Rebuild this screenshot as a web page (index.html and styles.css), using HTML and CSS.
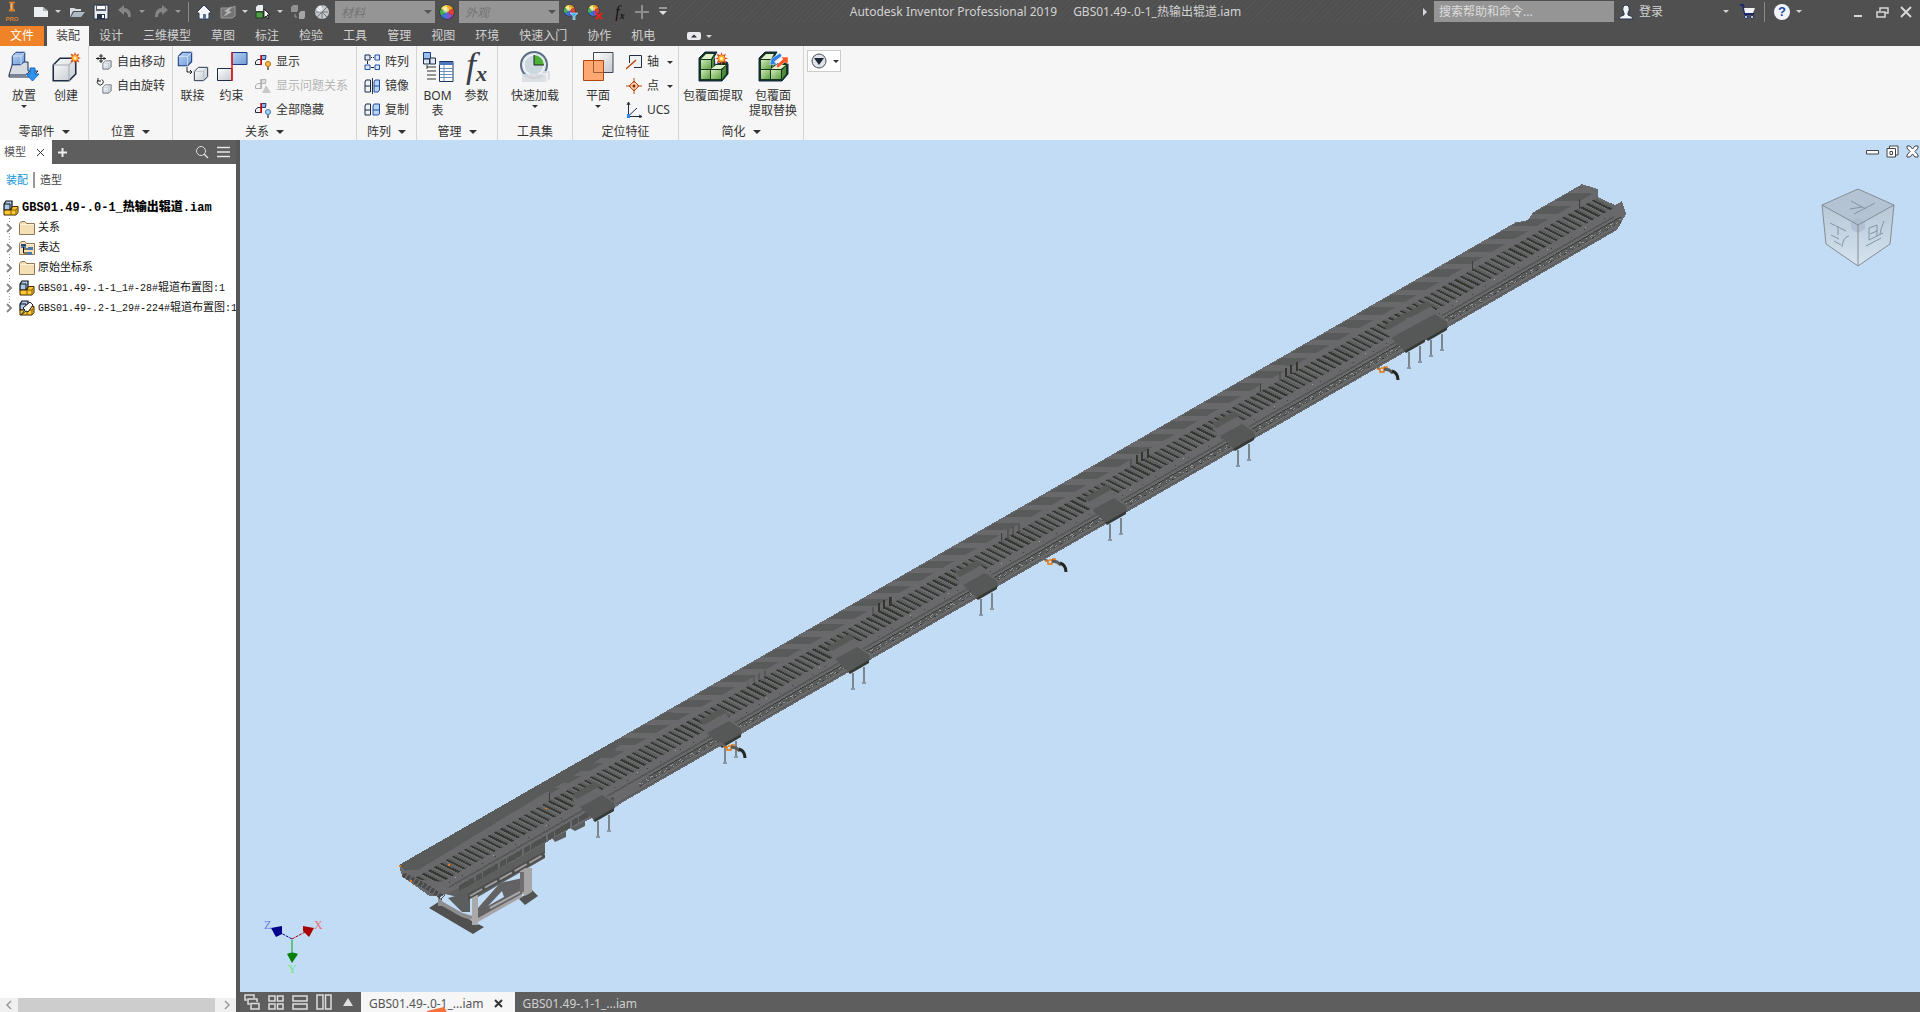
FILE: index.html
```html
<!DOCTYPE html>
<html lang="zh-CN">
<head>
<meta charset="utf-8">
<title>Autodesk Inventor Professional 2019</title>
<link rel="stylesheet" href="styles.css">
</head>
<body>
<svg class="defs" aria-hidden="true">
  <defs>
    <linearGradient id="gBlue" x1="0" y1="0" x2="1" y2="1"><stop offset="0" stop-color="#b9d3f2"/><stop offset="1" stop-color="#6f9bd6"/></linearGradient>
    <linearGradient id="gGrey" x1="0" y1="0" x2="1" y2="1"><stop offset="0" stop-color="#ffffff"/><stop offset="1" stop-color="#c3c8cd"/></linearGradient>
    <linearGradient id="gGreen" x1="0" y1="0" x2="1" y2="1"><stop offset="0" stop-color="#cfe8b8"/><stop offset="1" stop-color="#5fa044"/></linearGradient>
    <symbol id="wheel" viewBox="0 0 16 16">
      <circle cx="8" cy="8" r="7.5" fill="#222b45"/>
      <path d="M8 8V1A7 7 0 0 1 14 4.500Z" fill="#f4a21c"/><path d="M8 8 14 4.500A7 7 0 0 1 14 11.500Z" fill="#e2402c"/><path d="M8 8 14 11.500A7 7 0 0 1 8 15Z" fill="#8c4fc0"/><path d="M8 8V15A7 7 0 0 1 2 11.500Z" fill="#3b74dc"/><path d="M8 8 2 11.500A7 7 0 0 1 2 4.500Z" fill="#47b04a"/><path d="M8 8 2 4.500A7 7 0 0 1 8 1Z" fill="#f5e25c"/>
      <circle cx="7" cy="6" r="3" fill="#fff" opacity=".45"/>
    </symbol>
    <symbol id="burst" viewBox="0 0 12 12">
      <path d="M6 0 7 3 10 1.500 9 5 12 6 9 7 10.500 10.500 7 9 6 12 5 9 1.500 10.500 3 7 0 6 3 5 1.500 1.500 5 3Z" fill="#d8481c"/><circle cx="6" cy="6" r="3" fill="#ffb02e"/><circle cx="6" cy="6" r="1.500" fill="#fff6b0"/>
    </symbol>
    <symbol id="cube" viewBox="0 0 12 12">
      <path d="M1 4 4 1H11V8L8 11H1Z" fill="url(#gGrey)" stroke="#1d2b45" stroke-width=".7"/><path d="M1 4H8V11M8 4 11 1" fill="none" stroke="#a9b0ba" stroke-width=".5"/>
    </symbol>
    <symbol id="bcube" viewBox="0 0 12 12">
      <path d="M1 4 4 1H11V8L8 11H1Z" fill="url(#gBlue)" stroke="#173a80" stroke-width=".8"/><path d="M1 4H8V11M8 4 11 1" fill="none" stroke="#e2edfb" stroke-width=".6"/>
    </symbol>
    <symbol id="rel" viewBox="0 0 16 16">
      <path d="M.5 7.500 3 5.500H6.500V10.500H.5Z" fill="#eef1f4" stroke="#1d2b45"/><path d="M6.500 1.500H11L10.500 5.500H6.500Z" fill="#8fb2e2" stroke="#173a80"/><path d="M6 1V11" stroke="#e00000" stroke-width="1.500"/>
    </symbol>
    <symbol id="part" viewBox="0 0 16 16">
      <path d="M1 4 3 1H9V8L7 10H1Z" fill="#a9c8ea" stroke="#101010" stroke-width="1.200"/><path d="M1 4H7V10" fill="none" stroke="#101010"/>
      <path d="M1 10H8L9.500 6.500H15V12.500L13 15H1Z" fill="#ffc933" stroke="#3c2a00"/><path d="M8 10V15M8 10H13V15M13 10 15 7" fill="none" stroke="#8a5d00"/>
    </symbol>
    <symbol id="folder" viewBox="0 0 16 16">
      <path d="M.5 3.500Q1 2 3 1.500H6L7.500 3.500H15.500V14.500H.5Z" fill="#f5dfb4" stroke="#8f7655"/><path d="M1 4.500H15" stroke="#fff2d6"/>
    </symbol>
    <symbol id="vault" viewBox="0 0 32 32">
      <path d="M2 7 8 1H20L17 6 18 14 25 11H30L31 13V23L25 30H2Z" fill="#17351b" stroke="#0f2a4b"/>
      <path d="M4 8 9 3H17L14 8Z" fill="#dff0cd"/><path d="M4 9H14V18H4Z" fill="url(#gGreen)"/><path d="M15 9 17 5V15L15 17Z" fill="#4f8a3a"/>
      <path d="M4 19H13V28H4Z" fill="url(#gGreen)"/><path d="M14 19H24V28H14Z" fill="url(#gGreen)"/><path d="M14 18 19 14H29L24 18Z" fill="#dff0cd"/><path d="M25 19 29 15V23L25 28Z" fill="#4f8a3a"/>
    </symbol>
  </defs>
</svg>

<div class="app">
<header class="titlebar">
  <div class="quick">
    <button class="tool logo" aria-label="Inventor Pro"><svg width="14" height="20" viewBox="0 0 14 20"><path d="M3 1H11V3H9V11H11V14H3V11H5V3H3Z" fill="#d9812e"/><path d="M5 3H7V11H5Z" fill="#f6ba77"/></svg><span class="pro">PRO</span></button>
    <button class="tool new" aria-label="新建"><svg width="16" height="14"><path d="M1 2H10L15 6V12H1Z" fill="#eceff2"/><path d="M10 2V6H15" fill="#aab0b6"/></svg></button><span class="caret c1"></span>
    <button class="tool" aria-label="打开"><svg width="16" height="14"><path d="M1 12V3H5L7 4H12V6H4Z" fill="#d7dde3"/><path d="M2 12 5 7H16L12 12Z" fill="#aeb9c6"/></svg></button>
    <button class="tool save" aria-label="保存"><svg width="16" height="16"><path d="M1 1H15V15H1Z" fill="#e8ebf0" stroke="#27304a"/><path d="M3 1H13V7H3Z" fill="#5b6272"/><path d="M4 2H12V5H4Z" fill="#fff"/><path d="M4 10H12V15H4Z" fill="#27304a"/><path d="M9 11H11V14H9Z" fill="#fff"/></svg></button>
    <button class="tool undo" aria-label="撤销"><svg width="16" height="14"><path d="M1 5 7 0V3Q14 3 14 12H11Q11 7 7 7V10Z" fill="#858585"/></svg></button><span class="caret dim"></span>
    <button class="tool undo" aria-label="重做"><svg width="16" height="14"><path d="M15 5 9 0V3Q2 3 2 12H5Q5 7 9 7V10Z" fill="#858585"/></svg></button><span class="caret dim"></span>
    <span class="vsep"></span>
    <button class="tool" aria-label="主页"><svg width="16" height="16"><path d="M1 8 8 1 15 8V9H13V15H3V9H1Z" fill="#f4f6f8" stroke="#2d3a55"/><path d="M7 10H10V15H7Z" fill="#54709c"/></svg></button>
    <button class="tool home" aria-label="更新"><svg width="16" height="16"><path d="M1 4H11L15 2V12L12 14H1Z" fill="#747474" stroke="#9b9b9b"/><path d="M3 13 7 8 4 7 12 2 9 7 12 8Z" fill="#b5b5b5"/></svg></button><span class="caret"></span>
    <button class="tool sel" aria-label="选择"><svg width="16" height="16"><path d="M1 3 3 1H8V7H1Z" fill="#e9edf0"/><path d="M1 8H8V14H1Z" fill="#4f9e46" stroke="#183f18"/><path d="M9 5V14L11 12 13 15 14 14 12 11H15Z" fill="#fff" stroke="#222"/></svg></button><span class="caret"></span>
    <button class="tool sel" aria-label="部件"><svg width="16" height="16"><path d="M1 3 3 1H8V6L7 8H1Z" fill="#929292"/><path d="M9 9 11 7H15V13L14 15H9Z" fill="#a5a5a5"/><path d="M5 10V13H7" stroke="#999" fill="none"/></svg></button>
    <button class="tool ball" aria-label="材料"><svg width="16" height="16"><circle cx="8" cy="8" r="7" fill="#c4c8cb"/><path d="M3 3 13 13M2 8H14M8 1V15M13 3 3 13" stroke="#70757a"/><circle cx="6" cy="5" r="3" fill="#fff" opacity=".7"/></svg></button>
    <div class="combo"><select aria-label="材料"><option>材料</option></select><span class="caret dark"></span></div>
    <button class="tool w1" aria-label="外观"><svg width="16" height="16"><use href="#wheel"/></svg></button>
    <div class="combo"><select aria-label="外观"><option>外观</option></select><span class="caret dark"></span></div>
    <button class="tool w1" aria-label="调整"><svg width="16" height="16"><use href="#wheel" width="13" height="13"/><path d="M7 9H15L12 12V16H10V12Z" fill="#39b4ea" stroke="#fff" stroke-width=".5"/></svg></button>
    <button class="tool w2" aria-label="清除"><svg width="16" height="16"><use href="#wheel" width="13" height="13"/><path d="M9 9 15 15M15 9 9 15" stroke="#e3251b" stroke-width="2"/></svg></button>
    <button class="tool fx" aria-label="参数"><i>f</i><sub>x</sub></button>
    <button class="tool plus" aria-label="添加"><svg width="16" height="16"><path d="M8 1V15M1 8H15" stroke="#8d8d8d" stroke-width="2"/></svg></button>
    <button class="tool more" aria-label="自定义"><svg width="10" height="10"><path d="M1 1H9" stroke="#e0e0e0"/><path d="M1 4H9L5 8Z" fill="#e0e0e0"/></svg></button>
  </div>
  <div class="title"><span>Autodesk Inventor Professional 2019</span><span>GBS01.49-.0-1_热输出辊道.iam</span></div>
  <div class="account">
    <svg width="5" height="10"><path d="M0 1 4 5 0 9Z" fill="#d5d5d5"/></svg>
    <input class="search" type="text" aria-label="搜索" placeholder="搜索帮助和命令...">
    <button class="login"><svg width="16" height="16"><path d="M1 15Q1 12 6 11V9Q4 6 5 3Q8-1 11 3Q12 6 10 9V11Q15 12 15 15Z" fill="#f1f3f7" stroke="#25304c"/></svg>登录</button>
    <span class="caret acc"></span>
    <button class="tool cart" aria-label="商店"><svg width="16" height="16"><path d="M0 1H3L5 10H14" fill="none" stroke="#1d2b66" stroke-width="2"/><path d="M4 4H15L13 9H5Z" fill="#f4f4f8"/><circle cx="6" cy="13" r="1.500" fill="#fff" stroke="#1d2b66"/><circle cx="12" cy="13" r="1.500" fill="#fff" stroke="#1d2b66"/></svg></button>
    <span class="vsep"></span>
    <button class="help" aria-label="帮助">?</button><span class="caret hc"></span>
    <button class="tool win" aria-label="最小化"><svg width="12" height="12"><path d="M2 10H10" stroke="#d8d8d8" stroke-width="2"/></svg></button>
    <button class="tool win" aria-label="还原"><svg width="13" height="12"><path d="M4 5V2H12V7H9M1 6H9V11H1Z" fill="none" stroke="#d8d8d8" stroke-width="1.500"/></svg></button>
    <button class="tool win" aria-label="关闭"><svg width="12" height="12"><path d="M1 1 11 11M11 1 1 11" stroke="#d8d8d8" stroke-width="2"/></svg></button>
  </div>
</header>

<nav class="tabs">
  <button class="file">文件</button><button class="active">装配</button><button>设计</button><button>三维模型</button><button>草图</button><button>标注</button><button>检验</button><button>工具</button><button>管理</button><button>视图</button><button>环境</button><button>快速入门</button><button>协作</button><button>机电</button>
  <button class="collapse" aria-label="折叠功能区"><svg width="14" height="9"><rect width="14" height="8" rx="2" fill="#e9e9ee"/><path d="M4 5.500H10L7 2.500Z" fill="#2b2b2b"/></svg><span class="caret"></span></button>
</nav>

<section class="ribbon">
  <div class="panel p1"><div class="row">
    <button class="big"><svg width="32" height="32"><path d="M1 24 5 11H20V20H30L25 25 26 26H1Z" fill="#d7dce2" stroke="#1d2b45"/><path d="M1 24H18L24 18" fill="none" stroke="#1d2b45"/><use href="#bcube" x="3" y="0" width="15" height="15"/><path d="M22 17H27V23H31L24.500 30 18 23H22Z" fill="#2f94f0" stroke="#1769c2"/></svg>放置<span class="caret"></span></button>
    <button class="big"><svg width="32" height="32"><use href="#cube" x="1" y="5" width="27" height="27"/><use href="#burst" x="19" y="1" width="12" height="12"/></svg>创建</button>
  </div><h2>零部件<span class="caret"></span></h2></div>

  <div class="panel p2"><div class="col">
    <button class="small"><svg width="16" height="16"><path d="M5 0V9M0 4.500H10M3 2H7M3 7H7M2 3V6M8 3V6" stroke="#222" fill="none"/><use href="#cube" x="6" y="6" width="10" height="10"/></svg>自由移动</button>
    <button class="small"><svg width="16" height="16"><path d="M6 1.500A3 3 0 1 1 2 2M2 0V3H5" stroke="#222" fill="none"/><use href="#cube" x="6" y="6" width="10" height="10"/></svg>自由旋转</button>
  </div><h2>位置<span class="caret"></span></h2></div>

  <div class="panel p3"><div class="row">
    <button class="big"><svg width="32" height="32"><use href="#bcube" x="0" y="0" width="16" height="16"/><use href="#cube" x="16" y="15" width="16" height="16"/><path d="M10 16V21H14M13 19 15 21 13 23" fill="none" stroke="#222"/></svg>联接</button>
    <button class="big"><svg width="32" height="32"><path d="M16 1.500H31V13.500H16Z" fill="url(#gBlue)" stroke="#173a80"/><path d="M1.500 17.500H16V29.500H1.500Z" fill="url(#gGrey)" stroke="#1d2b45"/><path d="M16 1V30" stroke="#f01010" stroke-width="1.500"/></svg>约束</button>
    <div class="col">
      <button class="small"><svg width="16" height="16"><use href="#rel"/><circle cx="13" cy="10" r="2.500" fill="#ffc23c" stroke="#b8650c"/><path d="M12 13H14V16H12Z" fill="#777"/></svg>显示</button>
      <button class="small" disabled><svg class="off" width="16" height="16"><use href="#rel"/><path d="M11 7 16 15H7Z" fill="#777"/></svg>显示问题关系</button>
      <button class="small"><svg width="16" height="16"><use href="#rel"/><circle cx="13" cy="10" r="2.500" fill="#a9d2f7" stroke="#3474b0"/><path d="M12 13H14V16H12Z" fill="#777"/></svg>全部隐藏</button>
    </div>
  </div><h2>关系<span class="caret"></span></h2></div>

  <div class="panel p4"><div class="col">
    <button class="small"><svg width="16" height="16"><g fill="#dce8f8" stroke="#1f4fa8"><path d="M1 1H6V6H1Z" stroke="#1d2b45"/><path d="M11 1H15.500V6H11ZM1 11H6V15.500H1ZM11 11H15.500V15.500H11Z"/></g><path d="M3.500 7V10M7 3.500H8M9 3.500H10M7 13.500H10" stroke="#222"/></svg>阵列</button>
    <button class="small"><svg width="16" height="16"><path d="M1 4 2 2H6.500V14H1ZM1 8H6" fill="#eef1f4" stroke="#1d2b45"/><path d="M10 4 11 2H15.500V12L14 14H10ZM10 8H15" fill="#bcd4f3" stroke="#1f4fa8"/><path d="M8.500 0V16" stroke="#333"/></svg>镜像</button>
    <button class="small"><svg width="16" height="16"><path d="M1 4 2 2H6.500V13H1ZM1 8H6" fill="#eef1f4" stroke="#1d2b45"/><path d="M9 4 10 2H15.500V12L14 13H9ZM9 8H15" fill="#bcd4f3" stroke="#1f4fa8"/></svg>复制</button>
  </div><h2>阵列<span class="caret"></span></h2></div>

  <div class="panel p5"><div class="row">
    <button class="big"><svg width="32" height="32"><path d="M1.500 1.500H8.500V8H1.500Z" fill="#9dbdea" stroke="#173a80"/><path d="M1.500 8H7.500V13H1.500ZM8 7H13.500V13H8Z" fill="#dfe9f5" stroke="#1d2b45"/><path d="M5 16H14M5 20H14M5 24H14M5 28H14M5 14V18" stroke="#333"/><path d="M17.500 10.500H31V30.500H17.500Z" fill="#fff" stroke="#1d3561"/><path d="M17 11H31V14H17Z" fill="#4b78ba"/><path d="M18 17.500H31M18 20.500H31M18 23.500H31M18 26.500H31M22 14V30" stroke="#6d8fb9"/></svg>BOM<br>表</button>
    <button class="big"><span class="fxbig"><i>f</i><sub>x</sub></span>参数</button>
  </div><h2>管理<span class="caret"></span></h2></div>

  <div class="panel p6"><div class="row">
    <button class="big"><svg width="32" height="32"><circle cx="15" cy="14" r="13" fill="#dfe6ec" stroke="#5a6f84" stroke-width="2"/><circle cx="15" cy="14" r="10" fill="#cbd8e0" stroke="#fff"/><path d="M15 14V4A10 10 0 0 1 25 14Z" fill="#4cb038"/><path d="M15 4V14H25" stroke="#222" fill="none"/><path d="M3 23H22L25 20H31V28L28 31H3Z" fill="#d9dde1" opacity=".9"/><path d="M22 23H28V31" stroke="#fff" fill="none"/></svg>快速加载<span class="caret"></span></button>
  </div><h2>工具集</h2></div>

  <div class="panel p7"><div class="row">
    <button class="big"><svg width="32" height="32"><path d="M11.500 1.500H31V21.500H11.500Z" fill="url(#gGrey)" stroke="#3b4450"/><path d="M1.500 9.500H21.500V29.500H1.500Z" fill="#ff9f63" stroke="#b04713" fill-opacity=".9"/><path d="M11.500 10V21.500H21" stroke="#9b5c38" fill="none"/></svg>平面<span class="caret"></span></button>
    <div class="col">
      <button class="small"><svg width="16" height="16"><path d="M3.500 9V1.500H15.500V13.500H8" fill="#eef0f2" stroke="#222e42"/><path d="M0 15 10 6" stroke="#bd4a12" stroke-width="1.500"/></svg>轴<span class="caret"></span></button>
      <button class="small"><svg width="16" height="16"><path d="M8 3 13 8 8 13 3 8Z" fill="#ffc9a3" stroke="#bd4a12"/><path d="M8 0V5M8 11V16M0 8H5M11 8H16" stroke="#bd4a12"/><circle cx="8" cy="8" r="1.500" fill="#7a2905"/></svg>点<span class="caret"></span></button>
      <button class="small"><svg width="16" height="16"><path d="M2.500 1V14.500H15M2.500 14 11 6M1 3 2.500 0 4 3M13 13 16 14.500 13 16" fill="none" stroke="#222e42"/><path d="M1 12H4V16H1Z" fill="#3483f0"/></svg>UCS</button>
    </div>
  </div><h2>定位特征</h2></div>

  <div class="panel p8"><div class="row">
    <button class="big"><svg width="32" height="32"><use href="#vault"/><use href="#burst" x="18" y="1" width="13" height="13"/></svg>包覆面提取</button>
    <button class="big"><svg width="32" height="32"><use href="#vault"/><path d="M13 14 14 8 23 2 25 5 17 11 20 13Z" fill="#2f80e8" stroke="#fff" stroke-width=".5"/><path d="M19 15 26 8 24 6H31V13L28 11 21 17Z" fill="#ff5722" stroke="#fff" stroke-width=".5"/></svg>包覆面<br>提取替换</button>
  </div><h2>简化<span class="caret"></span></h2></div>

  <button class="expand" aria-label="更多选项"><svg width="16" height="16"><circle cx="8" cy="8" r="7" fill="#dfe4ea" stroke="#4a5058"/><path d="M3 5H13L8 12Z" fill="#1d2738"/></svg><span class="caret"></span></button>
</section>

<main class="body">
  <aside class="browser">
    <div class="bhead">
      <button class="btab">模型<svg width="9" height="9"><path d="M1 1 8 8M8 1 1 8" stroke="#333"/></svg></button>
      <button class="tool add" aria-label="添加"><svg width="9" height="9"><path d="M4.500 0V9M0 4.500H9" stroke="#eee" stroke-width="2"/></svg></button>
      <button class="tool" aria-label="搜索"><svg width="14" height="14"><circle cx="6" cy="6" r="4.500" fill="none" stroke="#ddd"/><path d="M9 9 13 13" stroke="#ddd" stroke-width="1.500"/></svg></button>
      <button class="tool menu" aria-label="菜单"><svg width="13" height="12"><path d="M0 1.500H13M0 6H13M0 10.500H13" stroke="#e6e6e6" stroke-width="1.500"/></svg></button>
    </div>
    <div class="modes"><a href="#assembly" class="on">装配</a><a href="#modeling">造型</a></div>
    <div class="root"><svg width="16" height="16"><use href="#part"/></svg><span>GBS01.49-.0-1_<b>热输出辊道</b>.iam</span></div>
    <ul class="tree">
      <li><svg class="chev" width="8" height="10"><path d="M1 1 5 5 1 9" fill="none" stroke="#8a8a8a" stroke-width="2"/></svg><svg width="16" height="16"><use href="#folder"/></svg>关系</li>
      <li><svg class="chev" width="8" height="10"><path d="M1 1 5 5 1 9" fill="none" stroke="#8a8a8a" stroke-width="2"/></svg><svg width="16" height="16"><use href="#folder"/><path d="M2 4H7V8H2ZM9 7H14V10H9ZM9 12H13V15H9Z" fill="#4a78b4"/><path d="M2 5H7M4.500 7V13H9M4.500 9H9" stroke="#111" fill="none"/></svg>表达</li>
      <li><svg class="chev" width="8" height="10"><path d="M1 1 5 5 1 9" fill="none" stroke="#8a8a8a" stroke-width="2"/></svg><svg width="16" height="16"><use href="#folder"/></svg>原始坐标系</li>
      <li><svg class="chev" width="8" height="10"><path d="M1 1 5 5 1 9" fill="none" stroke="#8a8a8a" stroke-width="2"/></svg><svg width="16" height="16"><use href="#part"/></svg><span><code>GBS01.49-.1-1_1#-28#</code>辊道布置图<code>:1</code></span></li>
      <li><svg class="chev" width="8" height="10"><path d="M1 1 5 5 1 9" fill="none" stroke="#8a8a8a" stroke-width="2"/></svg><svg width="16" height="16"><use href="#part"/><path d="M2 15 6 10 4 8 11 2 14 5 9 12 7 11Z" fill="#fff" stroke="#222"/></svg><span><code>GBS01.49-.2-1_29#-224#</code>辊道布置图<code>:1</code></span></li>
    </ul>
    <div class="hscroll"><svg width="6" height="10"><path d="M5 1 1 5 5 9" fill="none" stroke="#999" stroke-width="1.500"/></svg><span class="thumb"></span><svg width="6" height="10"><path d="M1 1 5 5 1 9" fill="none" stroke="#999" stroke-width="1.500"/></svg></div>
  </aside>

  <section class="work">
    <div class="view">
      <svg class="model" viewBox="240 140 1680 852" preserveAspectRatio="xMinYMin meet" role="img" aria-label="热输出辊道">
        <defs>
          <clipPath id="deckClip"><path d="M150 1H1117L1126 5H1130L1134 1H1181L1192 14V16H150Z"/></clipPath>
          <clipPath id="rollClip"><path d="M14 22H1198L1216 42H44Z"/></clipPath>
          <g id="station">
            <path d="M-27-12-17-18-1-25 9-15 20-7-4 7Z" fill="#68686b"/>
            <path d="M-27-17-5-30 1-26-22-13Z" fill="#565956"/>
            <path d="M-19-5 3-17 15-9 16-4-5 8Z" fill="#555856"/>
            <path d="M-6 8 15-4V-1L-4 10Z" fill="#363834"/>
            <path d="M-1 9V24M10 3V18" stroke="#666769" stroke-width="1.500"/><path d="M-3 25H1M8 19H12" stroke="#555"/>
          </g>
          <g id="robot">
            <path d="M-16-5-8-1" stroke="#666" stroke-width="2"/><path d="M-11-1H-8V2H-4V-2H-7M-4-3H-1V0" fill="none" stroke="#e8760a" stroke-width="1.500"/><path d="M-4-1 1 0 5 3" fill="none" stroke="#5a5c5a" stroke-width="3"/><path d="M4 1Q10 3 10 10" fill="none" stroke="#242622" stroke-width="3"/>
          </g>
          <g id="bars"><path d="M0 0V9M5-3V6M11-6V3" stroke="#34362e" stroke-width="2"/><path d="M-6 4V13" stroke="#444" stroke-width="1"/></g>
        </defs>

        <!-- support frame under the near end -->
        <path d="M429 908 440 901 472 921 484 927 473 934Z" fill="#4f504f"/>
        <path d="M519 899 532 890 538 896 525 905Z" fill="#525353"/>
        <path d="M436 880 545 842V858L478 897 466 899 441 893Z" fill="#5d5e5e"/>
        <path d="M440 898V906M441 903 462 915 472 918" fill="none" stroke="#8e8e90" stroke-width="4"/><path d="M448 898 470 892V912L462 912Z" fill="#5c5d5e"/>
        <path d="M476 916 522 889V897L478 922Z" fill="#a7a4a6"/>
        <path d="M478 908 500 883 527 877V891L478 918Z" fill="#626264"/><path d="M488 906 502 891 504 897Z" fill="#c2dcf5"/><path d="M490 908 520 892" stroke="#a9a6a8" stroke-width="2"/>
        <path d="M520 868H532V892L525 896 520 890Z" fill="#a7a4a6"/><path d="M520 872H524V892H520Z" fill="#6f6f72"/>
        <path d="M472 895H478V925H472Z" fill="#aba8aa"/>
        <path d="M468 900 545 857V851L468 894Z" fill="#4c4d4c"/><path d="M470 896 545 854" stroke="#9d9b9d" stroke-width="2" stroke-dasharray="14 3"/>
        <path d="M552 838 566 831V837L555 842ZM570 828 585 820V826L575 831Z" fill="#5c5d5e"/>

        <!-- conveyor: x along the line, y across it -->
        <g transform="matrix(1 -.5755 0 1 399 865)" fill="none" shape-rendering="crispEdges">
          <path d="M0 0H1117L1126 4H1130L1134 0H1183L1199 14V22L1216 40H1223L1227 55L1218 66H212L170 62H146L110 62L44 56L30 48L3 13Z" fill="#69696c"/>
          <path d="M0 0H150V12L20 16L6 9Z" fill="#585b5a"/>
          <g clip-path="url(#deckClip)"><path transform="skewX(60)" d="M120 8H1190" stroke="#585b5a" stroke-width="16" stroke-dasharray="13 9"/></g>
          <path d="M150 0H220V8L150 13Z" fill="#585b5a"/>
          <g clip-path="url(#rollClip)"><path transform="skewX(43)" d="M-40 32H1230" stroke="#5b5e5d" stroke-width="20" stroke-dasharray="4 2"/><path transform="skewX(43)" d="M-40 32H1230" stroke="#363833" stroke-width="20" stroke-dasharray="2 4"/></g>
          <path d="M4 12 26 36 44 58" stroke="#4a4c4b" stroke-width="4" stroke-dasharray="4 2"/>
          <path d="M50 47H1216" stroke="#3b3c3a" stroke-dasharray="1 12 1 19"/><path d="M56 45H1216" stroke="#a5a5a6" stroke-dasharray="1 37 1 52"/>
          <path d="M50 51H1215" stroke="#565857" stroke-width="2"/>
          <path d="M250 55H1222" stroke="#3c3e3a"/>
          <path d="M240 58H1222" stroke="#5a5c5b" stroke-width="5"/>
          <path d="M240 57H1222" stroke="#99999b" stroke-dasharray="2 5 1 3 3 6"/><path d="M243 59H1222" stroke="#939395" stroke-dasharray="1 4 2 7 1 2"/><path d="M241 60H1222" stroke="#3a3b39" stroke-dasharray="2 6 1 5"/>
          <path d="M215 64H1216" stroke="#545654"/>
          <path d="M60 58H215" stroke="#4f514f" stroke-width="6" stroke-dasharray="15 2 6 1"/>
          <path d="M150 15V23M492 15V23M602 15V23M861 15V23M1073 14V24M1180 13V23" stroke="#3c3e3c"/>
        </g>

        <use href="#station" x="599" y="812"/><use href="#station" x="726" y="738"/><use href="#station" x="854" y="664"/><use href="#station" x="982" y="590"/><use href="#station" x="1111" y="515"/><use href="#station" x="1239" y="441"/>
        <use href="#station" x="1410" y="343"/><use href="#station" x="1432" y="331"/>
        <use href="#robot" x="735" y="748"/><use href="#robot" x="1056" y="562"/><use href="#robot" x="1388" y="370"/>
        <use href="#bars" x="879" y="603"/><use href="#bars" x="1137" y="455"/><use href="#bars" x="1286" y="368"/>
        <use href="#bars" x="1008" y="530" opacity=".4"/><use href="#bars" x="754" y="676" opacity=".3"/>
        <path d="M399 865H401V867H399ZM410 880H412V882H410ZM448 864H450V866H448ZM545 808H547V809H545Z" fill="#e8760a"/>

        <!-- axis triad -->
        <path d="M292 939 279 932" stroke="#0a0aa0" stroke-dasharray="3 1"/><path d="M292 939 305 932" stroke="#b00000" stroke-dasharray="3 1"/><path d="M292 940V955" stroke="#0aa00a"/>
        <path d="M271 928 282 926V934L276 937Z" fill="#00008b"/><path d="M314 928 303 926V931L309 937Z" fill="#a80000"/><path d="M287 954Q292 951 298 954L292 963Z" fill="#068006"/>
        <text x="264" y="929" fill="#7079ee">Z</text><text x="314" y="929" fill="#ef6a72">X</text><text x="288" y="973" fill="#6ae77a">Y</text>
      </svg>
      <div class="docwin">
        <button class="tool" aria-label="最小化"><svg width="13" height="13"><path d="M.5 5.500H12.500V9H.5Z" fill="#fff" stroke="#444"/></svg></button>
        <button class="tool" aria-label="还原"><svg width="13" height="13"><path d="M3.500 1H12V10H3.500Z" fill="#fff" stroke="#444"/><path d="M1 3.500H9.500V12H1Z" fill="#fff" stroke="#444"/><path d="M4 6.500H6.500V9.500H4Z" fill="none" stroke="#444"/></svg></button>
        <button class="tool" aria-label="关闭"><svg width="13" height="13"><path d="M1 1H4L6.500 4 9 1H12V3L9 6.500 12 10V12H9L6.500 9 4 12H1V10L4 6.500 1 3Z" fill="#fff" stroke="#444"/></svg></button>
      </div>
      <svg class="viewcube" width="74" height="80" viewBox="0 0 74 80">
        <defs><linearGradient id="face" x1="0" y1="0" x2="0" y2="1"><stop offset="0" stop-color="#b7c7d6"/><stop offset="1" stop-color="#d6e4f0"/></linearGradient></defs>
        <path d="M1 17 37 1 73 17 37 37Z" fill="#b4c3d3"/><path d="M1 17 37 37V78L5 56Z" fill="url(#face)"/><path d="M73 17 37 37V78L69 56Z" fill="url(#face)"/>
        <path d="M37 30 44 34V41L37 45 30 41V34Z" fill="#a9b9cd" opacity=".7"/>
        <path d="M1 17 37 1 73 17 37 37ZM1 17 5 56 37 78 69 56 73 17M37 37V78" fill="none" stroke="#858d95"/>
        <!-- engraved face marks -->
        <g fill="none" stroke="#8494a3"><path d="M30 13 45 21M29 21 41 19M33 26 54 15"/><path d="M9 35 25 43M17 38V47M10 47 18 51M28 48Q22 49 21 59M13 53 20 57"/><path d="M48 40V52M48 40 56 37V48M49 46 56 43M48 52 62 45M45 58 60 50M63 33Q60 40 59 46"/></g>
      </svg>
    </div>
    <div class="docs">
      <button class="tool" aria-label="层叠"><svg width="16" height="16"><path d="M3 6H1V1H10V4M6 10H4V5H13V8M7 9.500H15V15H7Z" fill="none" stroke="#ddd" stroke-width="1.500"/></svg></button>
      <button class="tool" aria-label="平铺"><svg width="16" height="16"><path d="M1 2H7V7H1ZM9.500 2H15V7H9.500ZM1 10H7V15H1ZM9.500 10H15V15H9.500Z" fill="none" stroke="#ddd" stroke-width="1.500"/></svg></button>
      <button class="tool" aria-label="水平平铺"><svg width="16" height="16"><path d="M1 2H15V7H1ZM1 10H15V15H1Z" fill="none" stroke="#ddd" stroke-width="1.500"/></svg></button>
      <button class="tool" aria-label="垂直平铺"><svg width="16" height="16"><path d="M1 1H7V15H1ZM9.500 1H15V15H9.500Z" fill="none" stroke="#ddd" stroke-width="1.500"/></svg></button>
      <button class="tool" aria-label="展开"><svg width="16" height="16"><path d="M3 12H13L8 4Z" fill="#e0e0e0"/></svg></button>
      <button class="doc current">GBS01.49-.0-1_...iam<svg width="10" height="10"><path d="M1 1 8 8M8 1 1 8" stroke="#333" stroke-width="2"/></svg></button>
      <button class="doc">GBS01.49-.1-1_...iam</button>
      <svg class="mark" width="20" height="5"><path d="M0 4 17 0 20 5H0Z" fill="#f4703c"/></svg>
    </div>
  </section>
</main>
</div>
</body>
</html>
```
FILE: styles.css
```css
* { box-sizing: border-box; }
html, body { height: 100%; }
body { margin: 0; overflow: hidden; font: 12px/16px "Noto Sans", "Noto Sans CJK SC", sans-serif; color: #333; }
button { border: 0; background: none; padding: 0; margin: 0; font: inherit; color: inherit; }
svg { display: block; flex: none; }
h2 { margin: 0; font: inherit; }
.defs { position: absolute; width: 0; height: 0; }
.app { display: flex; flex-direction: column; height: 100vh; }

.caret { display: block; flex: none; width: 0; height: 0; border: 3px solid transparent; border-top: 3px solid currentColor; border-bottom: 0; }
.vsep { width: 1px; height: 20px; background: #8a8a8a; flex: none; }
.tool { display: flex; align-items: center; justify-content: center; flex: none; }

/* title bar */
.titlebar { display: flex; align-items: center; height: 26px; padding-bottom: 3px; background: #505050; color: #d2d2d2; }
.quick, .account { display: flex; align-items: center; flex: none; }
.logo { flex-direction: column; width: 24px; }
.logo svg { height: 15px; }
.pro { font: bold 6px/6px "Liberation Sans", sans-serif; color: #d9812e; }
.new { margin-left: 9px; }
.c1 { margin: 0 8px 0 7px; }
.quick .save { margin-left: 8px; }
.quick .undo { margin-left: 8px; }
.quick .caret { margin-left: 6px; }
.quick .new + .caret { margin-right: 8px; }
.dim { color: #999; }
.quick .vsep { margin: 0 7px 0 7px; }
.home { margin-left: 8px; }
.sel { margin-left: 7px; }
.ball { margin: 0 5px 0 8px; }
.combo { display: grid; align-items: center; width: 100px; height: 22px; background: #959595; }
.combo > * { grid-area: 1 / 1; }
.combo select { appearance: none; width: 100%; height: 22px; border: 0; padding: 0 6px; background: none; color: #737373; font: italic 12px/22px "Noto Sans CJK SC", sans-serif; }
.combo .caret { justify-self: end; margin-right: 3px; color: #555; border-width: 4px 4px 0; }
.w1 { margin: 0 4px; }
.w2 { margin: 0 9px 0 4px; }
.fx { width: 16px; color: #111; font: 16px/18px "Liberation Serif", serif; }
.fx sub { font: italic bold 10px/10px "Liberation Serif", serif; align-self: end; }
.plus { margin: 0 8px 0 6px; }
.title { flex: 1; display: flex; justify-content: center; gap: 16px; height: 23px; line-height: 23px; white-space: nowrap; background: repeating-linear-gradient(135deg, #505050 0 3px, #555 3px 4px); }
.search { width: 180px; height: 21px; margin-left: 6px; border: 0; border-radius: 0; padding: 0 5px; background: #959595; color: #eee; font: inherit; }
.search::placeholder { color: #dcdcdc; opacity: 1; }
.login { display: flex; align-items: center; gap: 5px; margin-left: 4px; }
.acc { margin: 0 11px 0 60px; }
.account .vsep { margin: 0 9px 0 8px; }
.help { width: 16px; height: 16px; border-radius: 8px; background: #f2f4fa; color: #1a4bb0; font: bold 13px/16px "Liberation Sans", sans-serif; }
.hc { margin: 0 44px 0 6px; }
.win { margin: 0 6px; width: 12px; }
.win:last-child { margin-right: 8px; }

/* ribbon tabs */
.tabs { display: flex; height: 20px; background: #505050; color: #d2d2d2; line-height: 20px; }
.tabs button { padding: 0 10px; }
.tabs .file { background: #f08228; color: #fff; margin-right: 3px; }
.tabs .active { background: #f6f6f6; color: #444; padding: 0 9px; }
.tabs .collapse { display: flex; align-items: center; gap: 5px; margin-left: 12px; }

/* ribbon */
.ribbon { display: flex; height: 94px; background: #f6f6f6; }
.panel { display: flex; flex-direction: column; justify-content: space-between; border-right: 1px solid #d4d4d4; padding-top: 4px; }
.panel h2 { display: flex; align-items: center; justify-content: center; gap: 7px; height: 17px; }
.panel h2 .caret { border-width: 4px 4px 0; }
.row { display: flex; }
.big { display: flex; flex-direction: column; align-items: center; text-align: center; width: 42px; line-height: 15px; white-space: nowrap; }
.big svg { margin: 1px 0 5px; }
.fxbig { margin-bottom: 6px; height: 32px; color: #3a3f48; font: 36px/30px "Liberation Serif", serif; }
.fxbig sub { font: italic bold 22px/10px "Liberation Serif", serif; vertical-align: -4px; }
.big .caret { margin-top: 2px; }
.small { display: flex; align-items: center; gap: 5px; height: 24px; white-space: nowrap; }
.small:disabled { color: #b4b4b4; }
.off { opacity: .35; filter: grayscale(1); }
.small .caret { margin-left: 3px; }
.p1 { width: 89px; }
.p1 .row { padding-left: 3px; }
.p2 { width: 84px; }
.p2 .col { padding-left: 7px; }
.p3 { width: 184px; }
.p3 .big { width: 39px; }
.p3 .col { padding-left: 4px; }
.p4 { width: 60px; }
.p4 .col { padding-left: 7px; }
.p5 { width: 81px; }
.p5 .big { width: 39px; }
.p6 { width: 75px; }
.p6 .big { width: 74px; }
.p7 { width: 106px; }
.p7 .big { width: 48px; }
.p7 .col { padding-left: 4px; }
.p5 .row, .p7 .row { padding-left: 1px; }
.p8 { width: 125px; }
.p8 .big { width: 60px; }
.p8 .row { padding-left: 4px; }
.expand { display: flex; align-items: center; gap: 6px; width: 34px; height: 22px; margin: 4px 0 0 3px; padding-left: 3px; border: 1px solid #ccc; background: #fff; }

/* browser pane */
.body { flex: 1; display: flex; min-height: 0; }
.browser { display: flex; flex-direction: column; width: 240px; flex: none; border-right: 4px solid #575757; background: #fff; overflow: hidden; }
.bhead { display: flex; align-items: center; height: 24px; padding-right: 6px; background: #5e5e5e; }
.btab { display: flex; align-items: center; gap: 10px; width: 52px; height: 24px; padding-left: 4px; background: #fff; font-size: 11px; color: #555; }
.add { margin: 0 auto 0 6px; }
.menu { margin-left: 8px; }
.modes { display: flex; padding: 8px 6px; font-size: 11px; line-height: 16px; }
.modes a { color: #444; text-decoration: none; }
.modes .on { color: #0f94d6; padding-right: 5px; margin-right: 5px; border-right: 2px solid #999; }
.root { display: flex; align-items: center; gap: 3px; height: 20px; margin-top: 2px; padding-left: 3px; color: #000; font: bold 12px/20px "Liberation Mono", "Noto Sans CJK SC", monospace; white-space: nowrap; }
.tree { list-style: none; margin: 0; padding: 0 0 0 6px; color: #111; font: 11px/20px "Liberation Mono", "Noto Sans CJK SC", monospace; background: repeating-linear-gradient(#999 0 1px, #fff 1px 3px) 9px 0 / 1px 90px no-repeat; }
.tree li { display: flex; align-items: center; height: 20px; white-space: nowrap; }
.tree li > svg { margin-right: 3px; }
.tree .chev { margin-right: 5px; background: #fff; }
.tree code { font: 10px/20px "Liberation Mono", monospace; }
.hscroll { display: flex; align-items: center; justify-content: space-between; gap: 6px; height: 14px; margin-top: auto; padding: 0 6px; background: #f0f0f0; }
.thumb { flex: 1; height: 14px; margin-right: 3px; background: #cdcdcd; }

/* graphics window */
.work { flex: 1; display: flex; flex-direction: column; min-width: 0; }
.view { flex: 1; position: relative; min-height: 0; background: #c2dcf5; overflow: hidden; }
.model { width: 100%; height: 100%; font: 12px "Liberation Serif", serif; }
.docwin { position: absolute; top: 5px; right: 1px; display: flex; gap: 7px; }
.viewcube { position: absolute; top: 48px; right: 25px; }
.docs { position: relative; display: flex; align-items: center; height: 20px; padding-left: 4px; gap: 8px; background: #5e5e5e; color: #cfcfcf; }
.doc { display: flex; align-items: center; gap: 10px; height: 20px; padding: 4px 0 0; line-height: 16px; }
.current { padding: 4px 11px 0 8px; background: #f6f6f6; color: #555; }
.docs .doc.current { margin-left: -3px; }
.mark { position: absolute; left: 187px; bottom: 0; }
```
